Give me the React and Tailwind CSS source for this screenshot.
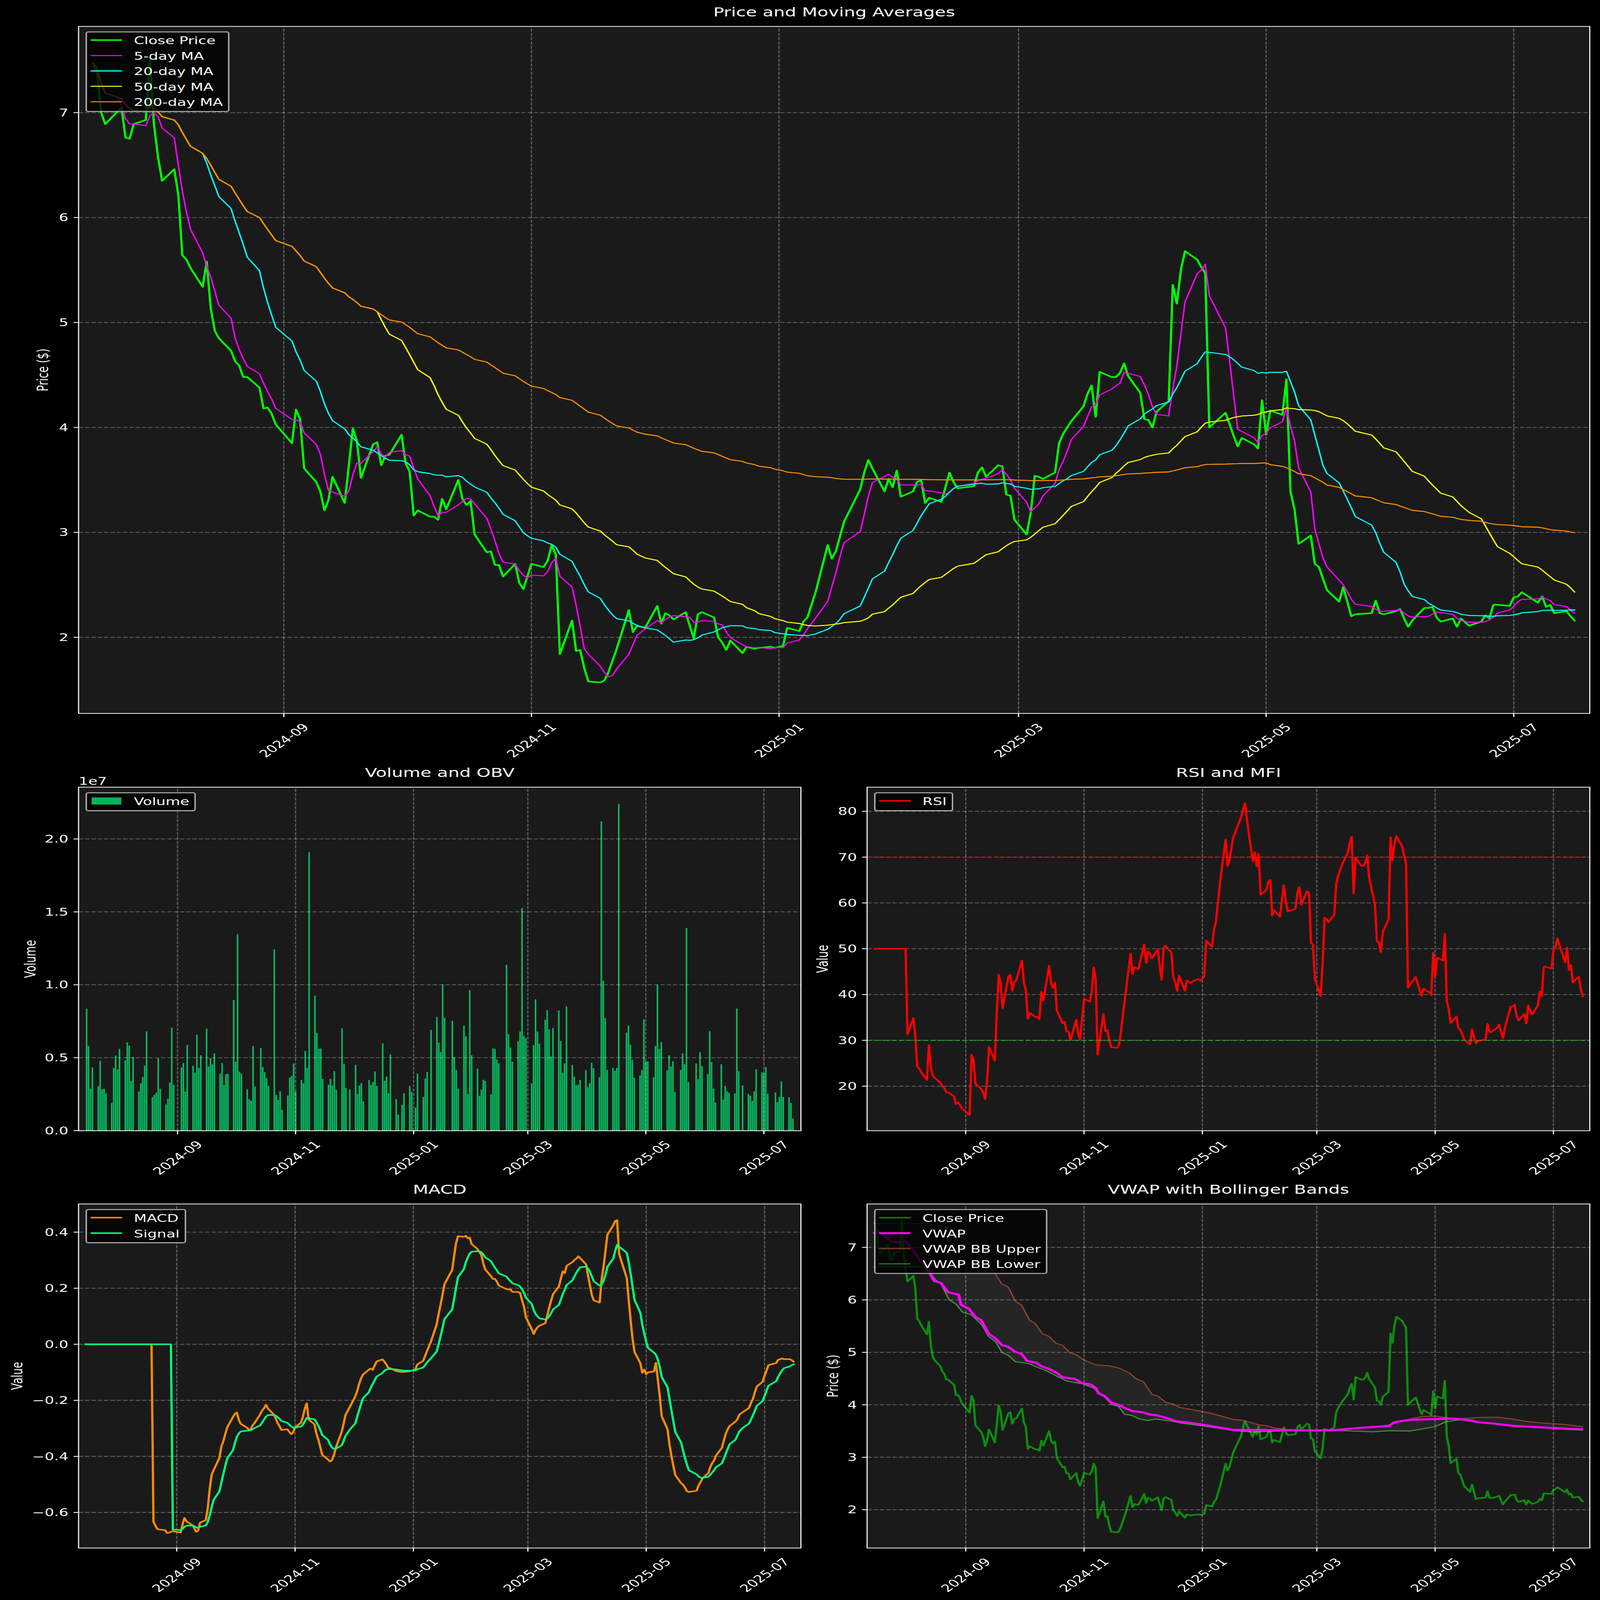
import React from "react";

const CLOSE = [
  7.47,7.38,7.0,6.89,7.01,7.05,6.76,6.75,6.89,6.93,7.52,6.89,
  6.58,6.35,6.46,6.22,5.64,5.60,5.52,5.34,5.58,5.13,4.92,4.85,4.73,4.63,4.59,4.48,4.48,4.38,4.18,4.19,4.13,4.03,
  3.85,4.17,4.08,3.61,3.48,3.39,3.21,3.31,3.53,3.28,3.63,3.99,3.87,3.52,3.84,3.86,3.64,3.73,3.74,3.93,
  3.66,3.58,3.16,3.21,3.15,3.15,3.12,3.32,3.22,3.50,3.32,3.26,3.30,2.98,2.81,2.82,2.69,2.69,2.58,2.70,2.52,2.46,2.58,
  2.70,2.67,2.73,2.88,2.79,1.84,2.16,1.87,1.88,1.71,1.58,1.57,1.59,1.67,1.78,1.89,2.26,2.05,2.11,2.09,
  2.30,2.13,2.23,2.21,2.17,2.24,2.11,1.99,2.22,2.24,2.19,2.00,1.95,1.88,1.97,1.85,1.91,1.89,1.90,1.91,1.90,
  1.92,2.09,2.06,2.15,2.19,2.43,2.88,2.75,2.82,2.96,3.10,3.41,3.57,3.69,3.61,3.39,3.51,3.43,3.59,3.34,
  3.39,3.48,3.50,3.28,3.33,3.29,3.43,3.57,3.48,3.42,3.44,3.57,3.62,3.53,3.64,3.63,3.36,3.35,3.12,
  2.98,3.18,3.54,3.53,3.51,3.57,3.85,3.94,4.00,4.06,4.20,4.32,4.40,4.10,4.53,4.48,4.48,4.52,4.61,4.49,4.33,
  4.08,4.07,4.00,4.15,4.25,5.36,5.18,5.50,5.68,5.60,5.53,5.47,4.00,4.14,4.03,3.92,3.82,3.90,3.84,3.80,4.26,
  3.93,4.16,4.12,4.46,3.39,3.22,2.89,2.97,2.70,2.67,2.56,2.45,2.34,2.48,2.34,2.20,2.22,2.23,2.35,2.23,2.22,
  2.25,2.27,2.18,2.10,2.16,2.28,2.28,2.29,2.19,2.15,2.18,2.10,2.18,2.11,2.15,2.21,2.18,2.31,2.31,2.30,
  2.38,2.39,2.43,2.33,2.39,2.29,2.31,2.23,2.25,2.20,2.16,
];

const VOLUME = [
  8.35,5.8,2.87,4.33,3.05,4.78,2.83,2.87,2.56,1.9,4.3,5.15,
  4.2,5.6,4.82,6.05,5.83,3.4,5.05,2.67,3.25,3.67,4.46,6.8,2.3,2.45,2.6,4.97,2.87,1.8,2.18,3.29,7.06,3.13,
  4.33,4.64,2.67,5.87,4.44,3.98,6.58,4.3,5.17,7.0,4.39,4.97,4.55,5.3,3.9,4.64,3.13,3.87,3.9,8.96,
  4.73,13.47,4.04,3.9,2.83,2.14,2.05,5.81,3.03,5.67,4.37,4.0,3.6,3.07,12.43,2.45,2.1,2.7,1.43,2.41,3.64,3.77,4.6,
  2.69,3.47,3.24,5.47,4.31,19.09,9.25,6.69,5.61,5.63,3.55,3.15,3.55,3.09,4.08,2.8,7.02,4.57,2.93,2.83,
  4.5,2.52,3.09,3.27,2.0,3.47,3.13,3.33,4.06,3.07,6.0,3.42,3.71,2.56,5.23,2.16,1.1,1.77,2.56,3.07,2.65,
  1.57,3.91,2.3,3.58,4.02,6.91,7.79,6.03,5.39,10.03,7.73,7.53,5.03,4.17,2.89,7.2,6.47,2.52,9.65,5.17,
  4.26,2.39,2.82,3.49,3.4,2.49,5.63,5.61,4.88,4.63,11.37,6.62,5.69,4.73,6.12,6.8,15.27,6.49,6.34,
  3.24,5.85,9.01,6.8,5.96,7.6,8.26,6.95,5.08,7.04,8.24,6.14,3.97,4.61,8.52,4.5,3.69,3.11,3.14,3.47,4.15,
  2.98,3.27,4.66,4.28,3.66,21.2,10.29,7.71,4.17,4.3,4.11,4.3,22.41,6.72,7.2,5.9,4.85,3.63,3.78,4.15,7.64,
  4.75,4.75,3.66,5.8,10.0,5.6,6.08,4.13,5.17,4.4,4.75,2.66,4.16,5.3,4.55,13.9,3.33,4.6,3.53,5.38,4.42,
  3.88,6.83,4.7,2.88,1.93,4.55,2.12,3.07,2.69,2.6,2.54,8.37,4.09,3.1,2.52,2.4,2.03,2.69,4.2,4.0,
  3.95,4.36,2.53,2.62,1.95,2.3,3.37,2.3,2.28,1.9,0.83,
];

const HOLIDAYS = new Set(["2024-09-02","2024-11-28","2024-12-25","2025-01-01","2025-01-09","2025-01-20","2025-02-17","2025-04-18","2025-05-26","2025-06-19","2025-07-04"]);
const DAY = 86400000;
const START = Date.UTC(2024, 6, 16);
const DAYS = [];
for (let i = 0; i <= 365; i++) {
  const d = new Date(START + i * DAY);
  const wd = d.getUTCDay();
  if (wd === 0 || wd === 6) continue;
  if (HOLIDAYS.has(d.toISOString().slice(0, 10))) continue;
  DAYS.push(i);
}

const rolling = (arr, n) =>
  arr.map((_, i) => {
    const s = arr.slice(Math.max(0, i - n + 1), i + 1);
    return s.reduce((a, b) => a + b, 0) / s.length;
  });

function ema(arr, a, minP) {
  let y = null, count = 0;
  return arr.map((v) => {
    if (v === null) return null;
    y = y === null ? v : a * v + (1 - a) * y;
    count += 1;
    return count >= minP ? y : null;
  });
}

const E12 = ema(CLOSE, 2 / 13, 12);
const E26 = ema(CLOSE, 2 / 27, 26);
const MACD_RAW = CLOSE.map((_, i) => (E26[i] === null ? null : E12[i] - E26[i]));
const SIGNAL_RAW = ema(MACD_RAW, 2 / 10, 9);
const MACD = MACD_RAW.map((v) => v ?? 0);
const SIGNAL = SIGNAL_RAW.map((v) => v ?? 0);

const DELTA = CLOSE.map((v, i) => (i === 0 ? 0 : v - CLOSE[i - 1]));
const GAIN = ema(DELTA.map((d) => Math.max(d, 0)), 1 / 14, 14);
const LOSS = ema(DELTA.map((d) => Math.max(-d, 0)), 1 / 14, 14);
const RSI = CLOSE.map((_, i) => (GAIN[i] === null ? 50 : 100 - 100 / (1 + GAIN[i] / LOSS[i])));

const VWAP_PTS = [[166,215],[175,205],[200,245],[215,248],[228,245],[240,270],[258,320],[270,345],[283,390],[296,397],[310,432],[330,440],[335,478],[350,492],[362,522],[374,535],[388,585],[400,600],[414,627],[425,632],[438,650],[452,660],[462,685],[480,692],[490,705],[505,715],[520,730],[530,745],[555,752],[568,767],[585,772],[595,785],[600,805],[612,815],[625,840],[640,848],[650,858],[665,870],[685,875],[700,883],[715,887],[735,898],[750,908],[770,912],[800,920],[830,930],[860,940],[900,940],[960,941],[1021,942],[1060,940],[1100,933],[1130,929],[1160,926],[1170,912],[1185,907],[1200,903],[1250,900],[1280,898],[1320,905],[1330,911],[1360,916],[1400,925],[1450,930],[1500,935],[1535,938]];
const UPPER_PTS = [[166,178],[270,178],[290,188],[310,193],[345,240],[400,360],[413,400],[426,412],[440,465],[452,480],[467,535],[478,547],[492,585],[505,595],[518,620],[530,627],[545,655],[558,663],[570,680],[595,700],[620,703],[640,712],[660,730],[672,750],[687,763],[703,808],[714,815],[730,838],[745,845],[757,857],[775,863],[800,872],[820,880],[835,888],[860,901],[880,905],[907,920],[925,925],[940,933],[960,938],[1000,941],[1021,942],[1060,938],[1100,933],[1130,930],[1160,922],[1185,908],[1200,900],[1225,890],[1250,889],[1275,895],[1300,898],[1330,894],[1370,893],[1400,900],[1430,910],[1460,915],[1500,920],[1535,928]];
const LOWER_PTS = [[166,338],[265,338],[270,345],[285,385],[296,400],[312,460],[325,475],[338,505],[355,515],[375,552],[388,595],[402,615],[414,655],[426,665],[440,688],[465,695],[480,707],[500,722],[520,742],[540,760],[570,770],[590,785],[610,815],[625,845],[640,855],[650,882],[665,887],[680,900],[695,905],[710,900],[740,907],[760,915],[800,925],[860,942],[900,948],[960,943],[1021,942],[1060,942],[1100,945],[1130,947],[1160,943],[1200,944],[1220,938],[1250,928],[1270,910],[1300,902],[1330,912],[1360,917],[1400,927],[1450,932],[1500,938],[1535,941]];
const zoomToLocal = ([zx, zy]) => [2200 + zx * 1.448 - 2423, 4780 + zy * 1.1014 - 4897];
const str = (pts) => pts.map(([a, b]) => `${a.toFixed(1)},${b.toFixed(1)}`).join(" ");

const TICK_DAYS = [47, 108, 169, 228, 289, 350];
const TICK_LABELS = ["2024-09", "2024-11", "2025-01", "2025-03", "2025-05", "2025-07"];
const PT = 300 / 72;

function Curve({ sx, sy, values, color, lw = 1.5, opacity = 1 }) {
  const pts = values.map((v, i) => [sx(DAYS[i]), sy(v)]);
  return <polyline points={str(pts)} fill="none" stroke={color} strokeWidth={lw * PT} strokeLinejoin="round" strokeLinecap="square" opacity={opacity} />;
}

function Legend({ items }) {
  return (
    <div className="absolute left-[19px] top-[20px] flex flex-col rounded-[8px] border-[4px] border-[#adadad] bg-black/80 py-[3px] pl-[10px] pr-[14px]">
      {items.map((it) => (
        <div key={it.label} className="flex h-[62.6px] items-center gap-[33px] text-[41.67px] leading-[48px] text-white">
          {it.patch ? (
            <span className="-mt-[6px] ml-[3px] mr-[2px] block h-[29px] w-[83px] bg-[#00ff7f]/70" />
          ) : (
            <span className="-mt-[6px] block w-[88px]" style={{ height: it.lw * PT, backgroundColor: it.color, opacity: it.opacity ?? 1 }} />
          )}
          <span className="whitespace-nowrap">{it.label}</span>
        </div>
      ))}
    </div>
  );
}

function Chart({ title, w, h, x0, k, yticks, sy, ylabel, ylabelX, offset, behind, children, legend }) {
  const sx = (d) => x0 + d * k;
  return (
    <div style={{ width: w }}>
      <div className="flex h-[108px] items-end justify-center pb-[30px] text-[50px] leading-[58px] text-white">{title}</div>
      <div className="relative bg-[#1a1a1a] outline-[3.33px] -outline-offset-[1.67px] outline-white" style={{ width: w, height: h }}>
        <svg width={w} height={h} className="block overflow-visible">
          {behind && behind(sx)}
          <g stroke="#ffffff" strokeOpacity="0.3" strokeWidth="3.33" strokeDasharray="12.33 5.33">
            {TICK_DAYS.map((d) => <line key={d} x1={sx(d)} x2={sx(d)} y1={h} y2={0} />)}
            {yticks.map((t) => <line key={t.l} x1={0} x2={w} y1={sy(t.v)} y2={sy(t.v)} />)}
          </g>
          {children && children(sx)}
          <g stroke="#ffffff" strokeWidth="3.33">
            {TICK_DAYS.map((d) => <line key={d} x1={sx(d)} x2={sx(d)} y1={h} y2={h + 14.6} />)}
            {yticks.map((t) => <line key={t.l} x1={-14.6} x2={0} y1={sy(t.v)} y2={sy(t.v)} />)}
          </g>
          <g className="fill-white text-[41.67px]">
            {yticks.map((t) => <text key={t.l} x={-29} y={sy(t.v) + 15} textAnchor="end">{t.l}</text>)}
            {TICK_DAYS.map((d, i) => (
              <text key={d} x={sx(d)} y={h + 125} textAnchor="middle" transform={`rotate(-45 ${sx(d)} ${h + 110})`}>{TICK_LABELS[i]}</text>
            ))}
            <text x={ylabelX} y={h / 2 + 14} textAnchor="middle" transform={`rotate(-90 ${ylabelX} ${h / 2})`}>{ylabel}</text>
            {offset && <text x={0} y={-10}>{offset}</text>}
          </g>
        </svg>
        <Legend items={legend} />
      </div>
    </div>
  );
}

const MAIN_TICKS = [2, 3, 4, 5, 6, 7].map((v) => ({ v, l: String(v) }));
const VOL_TICKS = [0, 0.5, 1, 1.5, 2].map((v) => ({ v, l: v.toFixed(1) }));
const RSI_TICKS = [20, 30, 40, 50, 60, 70, 80].map((v) => ({ v, l: String(v) }));
const MACD_TICKS = [0.4, 0.2, 0, -0.2, -0.4, -0.6].map((v) => ({ v, l: (v < 0 ? "\u2212" : "") + Math.abs(v).toFixed(1) }));

export default function App() {
  const syMain = (v) => 350 + (7 - v) * 426.8;
  const syVol = (v) => 1396 - v * 593;
  const syRsi = (v) => 97.5 + (80 - v) * 18.63;
  const syMacd = (v) => 114 + (0.4 - v) * 1140;
  const syVwap = (v) => 176 + (7 - v) * 213.4;
  const upper = UPPER_PTS.map(zoomToLocal);
  const lower = LOWER_PTS.map(zoomToLocal);
  const band = [...upper, ...[...lower].reverse()];
  // The browser window can be smaller than the 4470x6507 design: fit the page to it.
  const fit = `scale(${window.innerWidth / 4470}, ${window.innerHeight / 6507})`;

  return (
    <div className="h-screen w-screen overflow-hidden bg-black">
      <div className="flex h-[6507px] w-[4470px] origin-top-left flex-col bg-black font-['DejaVu_Sans',sans-serif] text-white" style={{ transform: fit }}>
        <div className="pl-[220px]">
          <Chart
            title="Price and Moving Averages" w={4221} h={2793} x0={40} k={11.34}
            yticks={MAIN_TICKS} sy={syMain} ylabel="Price ($)" ylabelX={-100}
            legend={[
              { label: "Close Price", color: "#00ff00", lw: 1.5 },
              { label: "5-day MA", color: "#ff00ff", lw: 1 },
              { label: "20-day MA", color: "#00ffff", lw: 1 },
              { label: "50-day MA", color: "#ffff00", lw: 1 },
              { label: "200-day MA", color: "#ff8c00", lw: 1 },
            ]}
          >
            {(sx) => (
              <>
                <Curve sx={sx} sy={syMain} values={CLOSE} color="#00ff00" lw={1.5} />
                <Curve sx={sx} sy={syMain} values={rolling(CLOSE, 5)} color="#ff00ff" lw={1} />
                <Curve sx={sx} sy={syMain} values={rolling(CLOSE, 20)} color="#00ffff" lw={1} />
                <Curve sx={sx} sy={syMain} values={rolling(CLOSE, 50)} color="#ffff00" lw={1} />
                <Curve sx={sx} sy={syMain} values={rolling(CLOSE, 200)} color="#ff8c00" lw={1} />
              </>
            )}
          </Chart>
        </div>

        <div className="mt-[193px] flex gap-[186px] pl-[220px]">
          <Chart
            title="Volume and OBV" w={2017} h={1396} x0={22} k={5.406}
            yticks={VOL_TICKS} sy={(v) => syVol(v)} ylabel="Volume" ylabelX={-135} offset="1e7"
            legend={[{ label: "Volume", patch: true }]}
            behind={(sx) => (
              <g fill="#00ff7f" fillOpacity="0.7">
                {VOLUME.map((m, i) => (
                  <rect key={i} x={sx(DAYS[i]) - 2.17} width="4.33" y={1396 - m * 59.3} height={m * 59.3} />
                ))}
              </g>
            )}
          />
          <Chart
            title="RSI and MFI" w={2018} h={1396} x0={20.3} k={5.419}
            yticks={RSI_TICKS} sy={syRsi} ylabel="Value" ylabelX={-125}
            legend={[{ label: "RSI", color: "#ff0000", lw: 1.5 }]}
          >
            {(sx) => (
              <>
                <Curve sx={sx} sy={syRsi} values={RSI} color="#ff0000" lw={1.5} />
                <line x1={0} x2={2018} y1={syRsi(70)} y2={syRsi(70)} stroke="#ff0000" strokeOpacity="0.5" strokeWidth={PT} strokeDasharray="15.4 6.7" />
                <line x1={0} x2={2018} y1={syRsi(30)} y2={syRsi(30)} stroke="#00ff00" strokeOpacity="0.5" strokeWidth={PT} strokeDasharray="15.4 6.7" />
              </>
            )}
          </Chart>
        </div>

        <div className="mt-[191px] flex gap-[186px] pl-[220px]">
          <Chart
            title="MACD" w={2017} h={1398} x0={19} k={5.42}
            yticks={MACD_TICKS} sy={syMacd} ylabel="Value" ylabelX={-172}
            legend={[
              { label: "MACD", color: "#ff8c00", lw: 1.5 },
              { label: "Signal", color: "#00ff7f", lw: 1.5 },
            ]}
          >
            {(sx) => (
              <>
                <Curve sx={sx} sy={syMacd} values={MACD} color="#ff8c00" lw={1.5} />
                <Curve sx={sx} sy={syMacd} values={SIGNAL} color="#00ff7f" lw={1.5} />
              </>
            )}
          </Chart>
          <Chart
            title="VWAP with Bollinger Bands" w={2018} h={1398} x0={20.3} k={5.419}
            yticks={MAIN_TICKS} sy={syVwap} ylabel="Price ($)" ylabelX={-96}
            legend={[
              { label: "Close Price", color: "#00ff00", lw: 1.5, opacity: 0.5 },
              { label: "VWAP", color: "#ff00ff", lw: 2 },
              { label: "VWAP BB Upper", color: "#ff6347", lw: 1, opacity: 0.5 },
              { label: "VWAP BB Lower", color: "#66ff66", lw: 1, opacity: 0.5 },
            ]}
            behind={() => <polygon points={str(band)} fill="#ffffff" fillOpacity="0.05" />}
          >
            {(sx) => (
              <>
                <Curve sx={sx} sy={syVwap} values={CLOSE} color="#00ff00" lw={1.5} opacity={0.5} />
                <polyline points={str(upper)} fill="none" stroke="#ff6347" strokeOpacity="0.5" strokeWidth={PT} strokeLinejoin="round" />
                <polyline points={str(lower)} fill="none" stroke="#66ff66" strokeOpacity="0.5" strokeWidth={PT} strokeLinejoin="round" />
                <polyline points={str(VWAP_PTS.map(zoomToLocal))} fill="none" stroke="#ff00ff" strokeWidth={2 * PT} strokeLinejoin="round" />
              </>
            )}
          </Chart>
        </div>
      </div>
    </div>
  );
}
